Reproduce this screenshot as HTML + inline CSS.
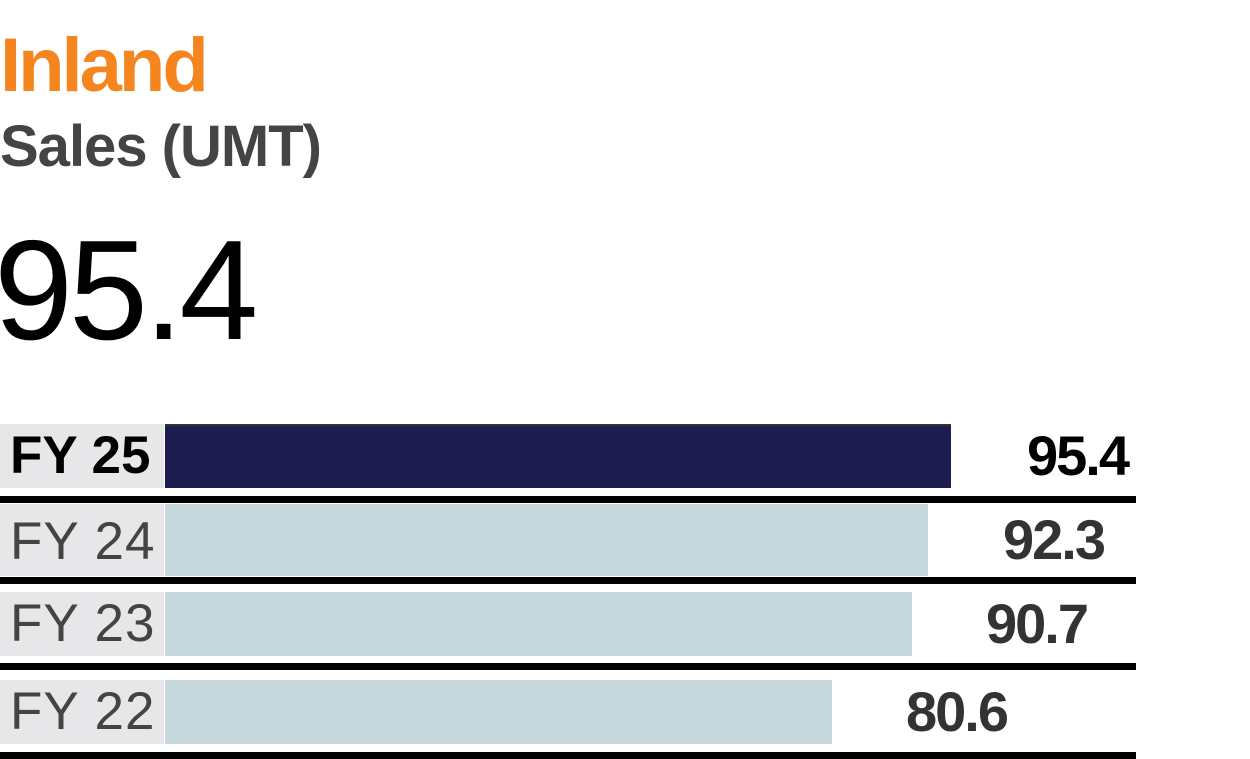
<!DOCTYPE html>
<html><head><style>
body{margin:0;width:1250px;height:758px;background:#fff;position:relative;overflow:hidden;font-family:"Liberation Sans",sans-serif}
.a{position:absolute;white-space:nowrap}
.lab{position:absolute;left:0;width:164px;background:#e7e7e9;font-size:53px;line-height:64px;padding-left:10px;box-sizing:border-box;color:#444;letter-spacing:1px}
.bar{position:absolute;left:165px}
.ln{position:absolute;left:0;width:1136px;height:7px;background:#000}
.v{position:absolute;font-size:56px;font-weight:bold;color:#333;text-align:right;width:300px;line-height:64px;letter-spacing:-2px}
</style></head><body>
<div class="a" style="left:0;top:22px;font-size:76px;font-weight:bold;color:#f5861f;letter-spacing:-3px">Inland</div>
<div class="a" style="left:0;top:113px;font-size:58px;font-weight:bold;color:#444;letter-spacing:-1px">Sales (UMT)</div>
<div class="a" style="left:-6px;top:209px;font-size:142px;color:#000;letter-spacing:-4px">95.4</div>

<div class="lab" style="top:424px;font-weight:bold;color:#000;letter-spacing:0">FY 25</div>
<div class="bar" style="top:424px;width:786px;height:64px;background:#1e1d4f;border-top:2px solid #333;box-sizing:border-box"></div>
<div class="v" style="top:424px;left:828px;color:#000">95.4</div>
<div class="ln" style="top:496px"></div>

<div class="lab" style="top:504px;height:72px;line-height:76px">FY 24</div>
<div class="bar" style="top:504px;width:763px;height:72px;background:#c6d8dc"></div>
<div class="v" style="top:508px;left:804px">92.3</div>
<div class="ln" style="top:577px"></div>

<div class="lab" style="top:592px">FY 23</div>
<div class="bar" style="top:592px;width:747px;height:64px;background:#c6d8dc"></div>
<div class="v" style="top:592px;left:787px">90.7</div>
<div class="ln" style="top:663px"></div>

<div class="lab" style="top:680px">FY 22</div>
<div class="bar" style="top:680px;width:667px;height:64px;background:#c6d8dc"></div>
<div class="v" style="top:680px;left:707px">80.6</div>
<div class="ln" style="top:752px"></div>
</body></html>
